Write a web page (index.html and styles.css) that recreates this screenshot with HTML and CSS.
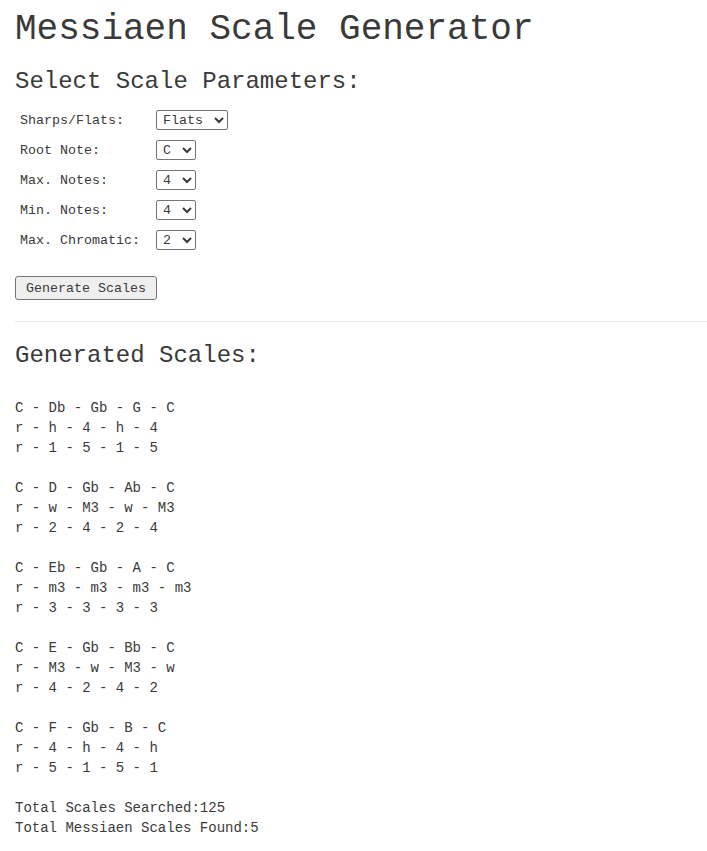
FILE: index.html
```html
<!DOCTYPE html>
<html>
<head>
<meta charset="utf-8">
<link rel="stylesheet" href="styles.css">
</head>
<body>
<h1 class="title">Messiaen Scale Generator</h1>
<h2 class="heading">Select Scale Parameters:</h2>
<div class="params">
  <label class="plabel">Sharps/Flats:</label>
  <div class="pfield"><select class="sel"><option>Flats</option><option>Sharps</option></select></div>
  <label class="plabel">Root Note:</label>
  <div class="pfield"><select class="sel"><option>C</option><option>Db</option><option>D</option><option>Eb</option><option>E</option><option>F</option><option>Gb</option><option>G</option><option>Ab</option><option>A</option><option>Bb</option><option>B</option></select></div>
  <label class="plabel">Max. Notes:</label>
  <div class="pfield"><select class="sel"><option>4</option><option>12</option></select></div>
  <label class="plabel">Min. Notes:</label>
  <div class="pfield"><select class="sel"><option>4</option><option>12</option></select></div>
  <label class="plabel">Max. Chromatic:</label>
  <div class="pfield"><select class="sel"><option>2</option><option>11</option></select></div>
</div>
<button class="gen">Generate Scales</button>
<hr class="rule">
<h2 class="heading heading-out">Generated Scales:</h2>
<div class="output">
  <div class="block">
    <div>C - Db - Gb - G - C</div>
    <div>r - h - 4 - h - 4</div>
    <div>r - 1 - 5 - 1 - 5</div>
  </div>
  <div class="block">
    <div>C - D - Gb - Ab - C</div>
    <div>r - w - M3 - w - M3</div>
    <div>r - 2 - 4 - 2 - 4</div>
  </div>
  <div class="block">
    <div>C - Eb - Gb - A - C</div>
    <div>r - m3 - m3 - m3 - m3</div>
    <div>r - 3 - 3 - 3 - 3</div>
  </div>
  <div class="block">
    <div>C - E - Gb - Bb - C</div>
    <div>r - M3 - w - M3 - w</div>
    <div>r - 4 - 2 - 4 - 2</div>
  </div>
  <div class="block">
    <div>C - F - Gb - B - C</div>
    <div>r - 4 - h - 4 - h</div>
    <div>r - 5 - 1 - 5 - 1</div>
  </div>
  <div>Total Scales Searched:125</div>
  <div>Total Messiaen Scales Found:5</div>
</div>
</body>
</html>
```
FILE: styles.css
```css
html, body {
  margin: 0;
  padding: 0;
}
body {
  padding: 0 0 0 15px;
  font-family: "Liberation Mono", "Courier New", monospace;
  color: #3a3a3a;
  background: #fff;
}
.title {
  font-size: 36px;
  font-weight: normal;
  line-height: 40px;
  margin: 10px 0 0 0;
}
.heading {
  font-size: 24px;
  font-weight: normal;
  line-height: 28px;
  margin: 18px 0 0 0;
}
.params {
  display: grid;
  grid-template-columns: 136px auto;
  grid-auto-rows: 30px;
  align-items: center;
  justify-items: start;
  margin-top: 9px;
  padding-left: 5px;
  font-size: 13.33px;
}
.sel {
  font-family: "Liberation Mono", "Courier New", monospace;
  font-size: 13.33px;
  color: #3a3a3a;
  height: 20px;
  padding: 0 0 0 2px;
  border: 1px solid #767676;
  border-radius: 2px;
  background: #fff;
}
.gen {
  display: block;
  margin-top: 21px;
  font-family: "Liberation Mono", "Courier New", monospace;
  font-size: 13.33px;
  color: #3a3a3a;
  height: 24px;
  padding: 0 10px;
  background: #efefef;
  border: 1px solid #767676;
  border-radius: 3px;
}
.rule {
  margin: 21px 0 0 0;
  border: 0;
  border-top: 1px solid #e6e6e6;
  height: 0;
}
.heading-out {
  margin-top: 20px;
}
.output {
  margin-top: 28px;
  font-size: 14px;
  line-height: 20px;
}
.block {
  margin-bottom: 20px;
}
```
